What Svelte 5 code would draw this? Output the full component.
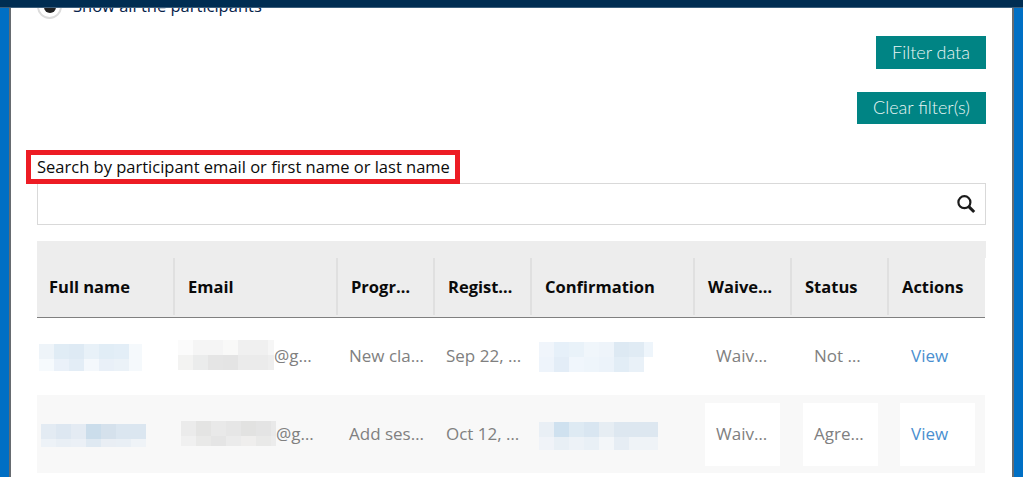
<script>
  const rows = [
    {
      name: { w: 103, h: [15, 12], c: [['#eef4f9','#e0ecf5','#deeaf4','#e8f1f8','#e1edf6','#e3eef7','#f5f9fc'],['#f6fafd','#eaf1f9','#e3edf6','#f4f8fc','#e9f0f8','#ebf2f8','#f5f9fc']] },
      email: { w: 96, h: [15, 15], c: [['#fbfbfb','#f5f5f5','#f5f5f5','#f9f9f8','#f0f0f0','#f0f0f0','#f6f6f6'],['#f3f3f2','#ebecec','#e5e5e5','#e4e4e4','#ebebeb','#ebebeb','#eeeeee']] },
      prog: 'New cla…', reg: 'Sep 22, …',
      conf: { w: 114, h: [15, 15], c: [['#f0f5fb','#e6f0f9','#e9f2f9','#f0f6fb','#eef4fa','#dde9f3','#e0ebf4','#eef5fb'],['#eef4fb','#e3edf7','#f0f6fc','#eef5fb','#ecf3fa','#e2edf6','#e9f1f8','#ffffff']] },
      waiver: 'Waiv…', status: 'Not …'
    },
    {
      name: { w: 105, h: [15, 8], c: [['#e3ebf3','#dde7f1','#e4ebf3','#cbddeb','#d5e1ec','#dbe6f0','#dbe6f0'],['#edf2f7','#e9eff5','#ebf0f6','#dfe9f2','#e9eef4','#e9eff5','#eff3f7']] },
      email: { w: 95, h: [15, 10], c: [['#ebebeb','#e4e4e3','#e9e9e9','#e6e6e6','#e2e2e1','#e4e4e4','#e9e9e9'],['#f0f0f0','#e9e9e8','#e5e5e5','#ebebeb','#efeeed','#e9e9e8','#ececec']] },
      prog: 'Add ses…', reg: 'Oct 12, …',
      conf: { w: 119, h: [15, 13], c: [['#e9eff5','#cfe1ef','#deeaf3','#d9e6f1','#e6edf3','#dde7f0','#dde7f0','#dde7f0'],['#f0f3f8','#e8eff5','#edf2f7','#e9f0f6','#f3f6f9','#e6edf4','#eff3f7','#eff3f7']] },
      waiver: 'Waiv…', status: 'Agre…'
    }
  ];
  const heads = ['Full name', 'Email', 'Progr…', 'Regist…', 'Confirmation', 'Waive…', 'Status', 'Actions'];
</script>

{#snippet blur(b)}
  <span class="blur" style="width:{b.w}px">
    {#each b.c as line, i}
      <span class="blur-row" style="height:{b.h[i]}px">
        {#each line as col}
          <span class="px" style="background:{col}"></span>
        {/each}
      </span>
    {/each}
  </span>
{/snippet}

<div class="shell">
  <div class="topbar"></div>
  <div class="frame">
    <main class="panel">
      <label class="radio-row">
        <span class="radio"><span class="dot"></span></span>
        <span class="radio-text">Show all the participants</span>
      </label>

      <div class="actions">
        <button class="btn filter">Filter data</button>
        <button class="btn clear">Clear filter(s)</button>
      </div>

      <div class="search-label">Search by participant email or first name or last name</div>
      <div class="search">
        <svg width="20" height="20" viewBox="0 0 20 20" fill="none" stroke="#1b1b1b" aria-hidden="true">
          <circle cx="8.4" cy="8.2" r="6" stroke-width="2.2" />
          <path d="M12.8 12.6 L18.2 18" stroke-width="3" />
        </svg>
      </div>

      <div class="table-band"></div>
      <table>
        <colgroup>
          <col class="w138" /><col class="w163" /><col class="w97" /><col class="w97" />
          <col class="w163" /><col class="w97" /><col class="w97" /><col class="w96" />
        </colgroup>
        <thead>
          <tr>
            {#each heads as h, i}
              <th class:first={i === 0}><span>{h}</span></th>
            {/each}
          </tr>
        </thead>
        <tbody>
          {#each rows as r, idx}
            <tr class:alt={idx === 1}>
              <td class="n-name">{@render blur(r.name)}</td>
              <td class="n-email"><span class="email">{@render blur(r.email)}<span>@g…</span></span></td>
              <td class="txt">{r.prog}</td>
              <td class="txt">{r.reg}</td>
              <td class="n-conf">{@render blur(r.conf)}</td>
              <td class="chip c1"><span>{r.waiver}</span></td>
              <td class="chip"><span>{r.status}</span></td>
              <td class="chip"><span><a href="#view">View</a></span></td>
            </tr>
          {/each}
        </tbody>
      </table>
    </main>
  </div>
</div>

<style>
  :global(body) {
    margin: 0;
    background: #fff;
  }
  .shell {
    height: 477px;
    display: flex;
    flex-direction: column;
    overflow: hidden;
    font-family: "Open Sans", "Noto Sans", sans-serif;
    font-size: 16.5px;
  }
  .topbar {
    height: 8px;
    flex: none;
    background: #002d52;
    border-bottom: 1px solid #3d5f7c;
    box-sizing: border-box;
  }
  .frame {
    flex: 1;
    min-height: 0;
    background: #006fc4;
    padding: 0 9px;
    display: flex;
  }
  .panel {
    flex: 1;
    min-width: 0;
    background: #fff;
    border-left: 2px solid #666b70;
    border-right: 2px solid #666b70;
    padding: 0 26px;
    overflow: hidden;
  }
  .radio-row {
    display: flex;
    align-items: center;
    gap: 11px;
    margin-top: -14px;
    height: 25px;
    color: #07234a;
  }
  .radio-text {
    margin-top: -2px;
  }
  .radio {
    width: 25px;
    height: 25px;
    box-sizing: border-box;
    border: 2px solid #dcdcdc;
    border-radius: 50%;
    display: flex;
    align-items: center;
    justify-content: center;
    flex: none;
  }
  .dot {
    width: 12px;
    height: 12px;
    border-radius: 50%;
    background: #222;
  }
  .actions {
    display: flex;
    flex-direction: column;
    align-items: flex-end;
    gap: 23px;
    margin-top: 17px;
  }
  .btn {
    border: 0;
    padding: 0 0 2px;
    background: #008484;
    color: #e9f6f5;
    font-family: "Lato", sans-serif;
    font-weight: 300;
    font-size: 18px;
    display: block;
  }
  .filter {
    width: 110px;
    height: 33px;
  }
  .clear {
    width: 129px;
    height: 32px;
  }
  .search-label {
    width: max-content;
    box-sizing: border-box;
    height: 34px;
    margin: 26px 0 -1px -11px;
    border: 5px solid #ed1c24;
    padding: 0 5px 0 6px;
    line-height: 24px;
    color: #0b0b0b;
    position: relative;
    background: #fff;
  }
  .search {
    height: 42px;
    box-sizing: border-box;
    border: 1px solid #d9d9d9;
    display: flex;
    align-items: center;
    justify-content: flex-end;
    padding-right: 9px;
  }
  .table-band {
    height: 17px;
    margin-top: 16px;
    background: #ededed;
  }
  table {
    border-collapse: separate;
    border-spacing: 0;
    table-layout: fixed;
    width: 948px;
  }
  .w138 { width: 138px; }
  .w163 { width: 163px; }
  .w97 { width: 97px; }
  .w96 { width: 96px; }
  th {
    height: 60px;
    box-sizing: border-box;
    padding: 0;
    background: #ededed;
    border-bottom: 1px solid #808080;
    text-align: left;
    vertical-align: top;
    font-weight: 700;
    font-size: 16.5px;
    color: #0a0a0a;
    white-space: nowrap;
  }
  th span {
    display: block;
    height: 57px;
    line-height: 57px;
    padding-left: 13px;
    border-right: 2px solid #e0e0e0;
  }
  th.first span {
    padding-left: 12px;
  }
  th:last-child span {
    border-right: 0;
  }
  tbody tr {
    height: 77px;
  }
  tbody tr.alt {
    height: 78px;
    background: #f8f8f8;
  }
  td {
    padding: 0;
    color: #808080;
    white-space: nowrap;
    font-size: 17px;
  }
  .txt {
    padding: 0 0 2px 11px;
  }
  .n-name {
    padding: 2px 0 0 2px;
  }
  .alt .n-name {
    padding-left: 4px;
  }
  .n-email {
    padding: 0 0 3px 3px;
  }
  .alt .n-email {
    padding: 0 0 1px 6px;
  }
  .n-conf {
    padding: 1px 0 0 7px;
  }
  .alt .n-conf {
    padding-top: 3px;
  }
  .email {
    display: flex;
    align-items: center;
  }
  .blur {
    display: block;
    overflow: hidden;
  }
  .blur-row {
    display: flex;
  }
  .px {
    width: 15px;
    flex: none;
  }
  .chip span {
    display: block;
    width: 75px;
    height: 63px;
    line-height: 61px;
    margin-left: 11px;
    padding-left: 11px;
    box-sizing: border-box;
  }
  .chip.c1 span {
    margin-left: 10px;
  }
  .alt .chip span {
    background: #fff;
  }
  a {
    color: #4a8fd0;
    text-decoration: none;
  }
</style>
